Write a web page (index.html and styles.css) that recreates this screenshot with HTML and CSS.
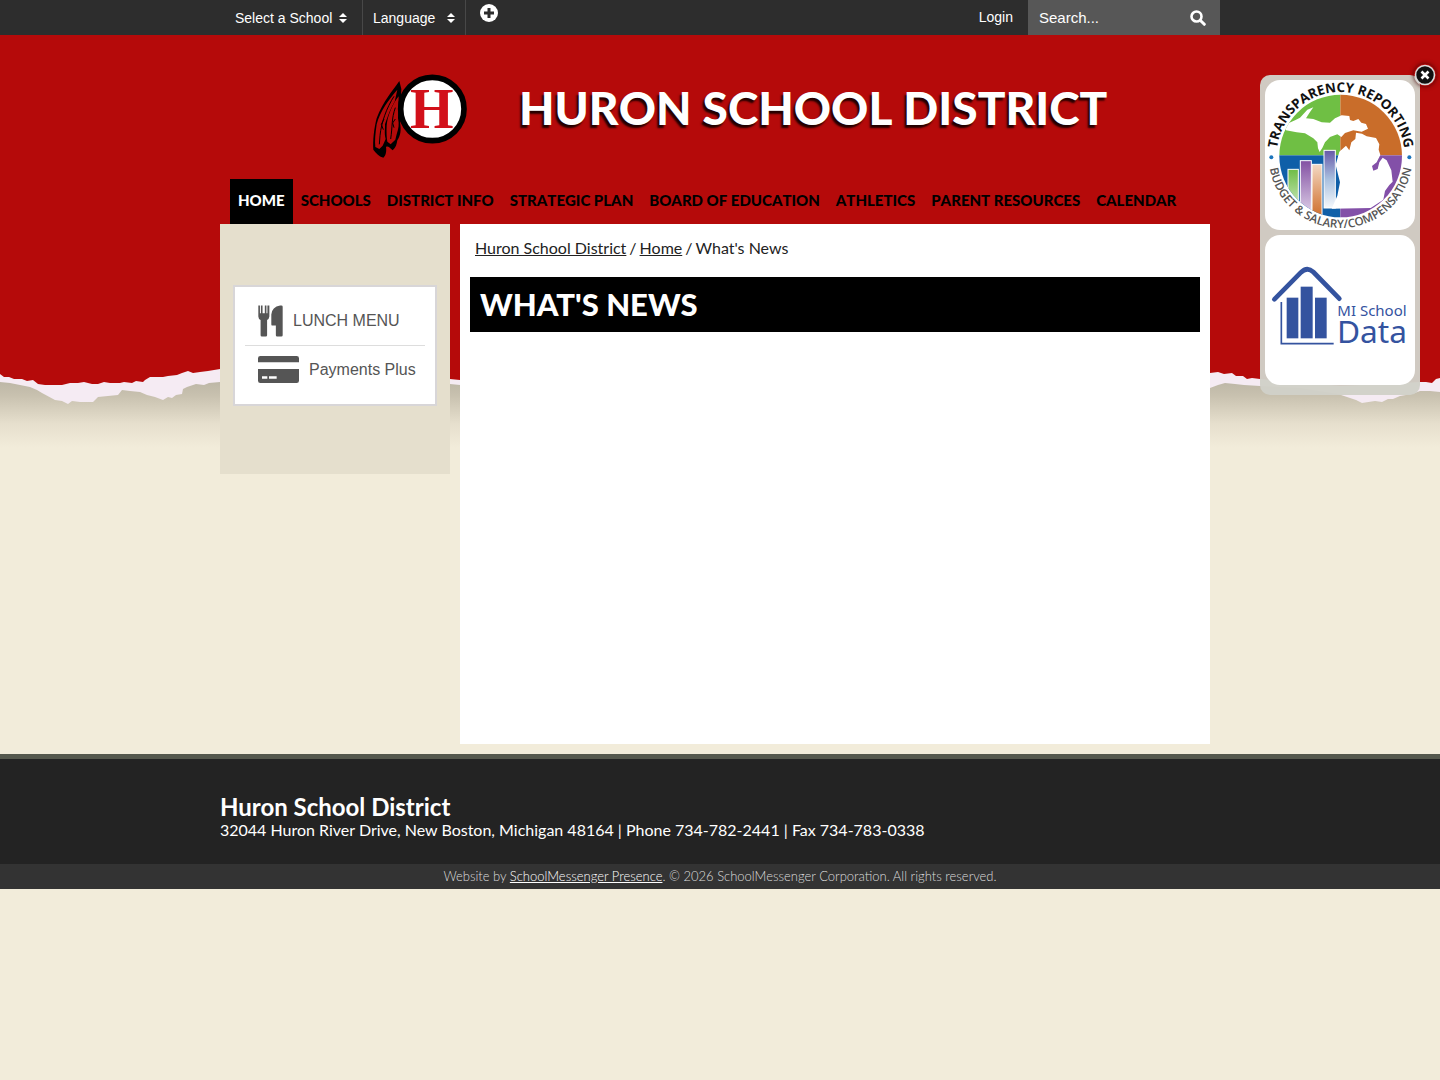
FILE: index.html
```html
<!DOCTYPE html>
<html lang="en">
<head>
    <meta charset="utf-8">
    <title>What's News - Huron School District</title>
    <link rel="stylesheet" href="styles.css">
</head>
<body>

<!-- torn paper background -->
<svg class="torn-paper" viewBox="0 0 1440 455" preserveAspectRatio="none" aria-hidden="true">
    <defs>
        <linearGradient id="paperShadow" x1="0" y1="0" x2="0" y2="1">
            <stop offset="0" stop-color="#bab4a4"/>
            <stop offset=".25" stop-color="#c8c1af"/>
            <stop offset=".65" stop-color="#e6dfcd"/>
            <stop offset="1" stop-color="#f2ecda"/>
        </linearGradient>
    </defs>
    <rect y="378" width="1440" height="70" fill="url(#paperShadow)"/>
    <path fill="#f5ebf3" d="M0 360H1440V392L1430 391 1420 391 1412 394 1400 396 1393 399 1388 399 1382 402 1375 401 1362 403 1356 400 1350 398 1338 394 1300 388 1260 386 1244 385 1235 384 1225 383 1218 385 1210 388 1000 384 700 388 460 385 450 384 300 386 220 382 209 383 204 385 196 384 187 387 183 389 182 394 176 395 172 398 168 397 163 400 155 397 147 395 140 392 130 391 122 390 118 395 108 396 98 397 93 402 80 402 72 401 68 404 62 401 55 400 42 393 37 390 30 387 20 385 10 383 0 382Z"/>
    <path fill="#b50a0a" d="M0 0H1440V378L1436 379 1432 383 1426 382 1420 382 1340 386 1300 382 1260 379 1252 378 1247 379 1243 376 1236 376 1232 373 1224 374 1218 372 1210 373 1000 376 700 374 460 380 450 379 300 376 220 369 208 371 200 372 193 373 188 371 182 373 177 375 168 376 163 377 157 377 150 377 145 380 143 382 136 381 132 383 124 382 120 383 110 383 104 382 98 384 92 384 84 382 78 383 70 383 62 385 52 385 45 385 38 384 33 380 27 381 22 379 14 379 9 377 4 377 0 374Z"/>
</svg>

<div class="topbar">
    <div class="topbar-inner">
        <div class="picker picker-school">
            <select aria-label="Select a School">
                <option>Select a School</option>
            </select>
            <svg class="sort" viewBox="0 0 8 10" aria-hidden="true"><path d="M4 0L8 4H0ZM0 6H8L4 10Z"/></svg>
        </div>
        <div class="picker picker-language">
            <select aria-label="Language">
                <option>Language</option>
            </select>
            <svg class="sort" viewBox="0 0 8 10" aria-hidden="true"><path d="M4 0L8 4H0ZM0 6H8L4 10Z"/></svg>
        </div>
        <button class="more" type="button" aria-label="More">
            <svg viewBox="0 0 18 18" aria-hidden="true"><circle cx="9" cy="9" r="9" fill="#fff"/><path d="M9 4V14M4 9H14" stroke="#2d2d2d" stroke-width="3"/></svg>
        </button>
        <a class="login" href="#">Login</a>
        <form class="search">
            <input type="text" placeholder="Search..." aria-label="Search">
            <button type="submit" aria-label="Search">
                <svg viewBox="0 0 16 16" aria-hidden="true"><circle cx="6.5" cy="6.5" r="5" fill="none" stroke="#fff" stroke-width="2.6"/><path d="M10.2 10.2L14.3 14.3" stroke="#fff" stroke-width="3" stroke-linecap="round"/></svg>
            </button>
        </form>
    </div>
</div>

<header class="banner">
    <svg class="logo" viewBox="36 42 288 258" role="img" aria-label="Huron H">
        <path d="M118 66C100 92 68 128 50 178C42 208 38 246 40 272C48 282 56 292 70 296C78 290 80 276 78 264C84 260 88 266 98 274C108 266 110 256 112 244C122 230 124 214 120 190L124 90Z"/>
        <path fill="#b50a0a" d="M112 92C88 120 60 156 50 196C46 224 44 246 46 264L58 270 68 260 77 240C72 222 76 208 75 196C84 168 92 148 104 128Z"/>
        <path fill="#b50a0a" d="M116 112C98 134 82 172 80 200C79 220 80 236 82 248L92 256 106 242 110 226C116 208 118 196 114 178Z"/>
        <path fill="none" stroke="#000" stroke-width="3" d="M102 112C80 146 64 190 60 230L58 256M72 180L64 196 70 212M106 146C94 180 98 200 92 240M106 180L98 192 102 206"/>
        <circle cx="217" cy="150" r="95" fill="#fff" stroke="#000" stroke-width="17"/>
        <text class="logo-letter" x="215" y="207" text-anchor="middle">H</text>
    </svg>
    <div class="site-title">HURON SCHOOL DISTRICT</div>
</header>

<nav class="main-nav">
    <a class="active" href="#">HOME</a>
    <a href="#">SCHOOLS</a>
    <a href="#">DISTRICT INFO</a>
    <a href="#">STRATEGIC PLAN</a>
    <a href="#">BOARD OF EDUCATION</a>
    <a href="#">ATHLETICS</a>
    <a href="#">PARENT RESOURCES</a>
    <a href="#">CALENDAR</a>
</nav>

<div class="page">
    <aside class="sidebar">
        <div class="quick-links">
            <a href="#">
                <svg class="icon-lunch" viewBox="113 101 77 98" aria-hidden="true"><path d="M114 102H119V126H122V102H127V126H134V102H139V126H142V102H148V136Q147 144 141 147V194Q141 198 137 198H125Q121 198 121 194V147Q114 143 114 136ZM181 102H185Q189 102 189 106V194Q189 198 185 198H172Q168 198 168 194V164H156Q154 164 154 160V130Q156 106 181 102Z"/></svg>
                LUNCH MENU
            </a>
            <a href="#">
                <svg class="icon-card" viewBox="114 258 123 81" aria-hidden="true"><path fill-rule="evenodd" d="M114 277V265Q114 258 121 258H230Q237 258 237 265V277ZM114 297H237V332Q237 339 230 339H121Q114 339 114 332ZM126 319V326H142V319ZM147 319V326H170V319Z"/></svg>
                Payments Plus
            </a>
        </div>
    </aside>

    <main class="content">
        <div class="breadcrumb">
            <a href="#">Huron School District</a>
            <span>/</span>
            <a href="#">Home</a>
            <span>/</span>
            <span>What's News</span>
        </div>
        <h1>WHAT'S NEWS</h1>
    </main>
</div>

<footer>
    <div class="footer-main">
        <div class="footer-inner">
            <h2>Huron School District</h2>
            <p>32044 Huron River Drive, New Boston, Michigan 48164 | Phone 734-782-2441 | Fax 734-783-0338</p>
        </div>
    </div>
    <div class="footer-bottom">Website by <a href="#">SchoolMessenger Presence</a>. &copy; 2026 SchoolMessenger Corporation. All rights reserved.</div>
</footer>

<!-- floating badges -->
<div class="badges">
    <button class="badges-close" type="button" aria-label="Close">
        <svg viewBox="0 0 22 22" aria-hidden="true"><circle cx="11" cy="11" r="9.5" fill="#111" stroke="#ddd" stroke-width="1.6"/><path d="M7.5 7.5L14.5 14.5M14.5 7.5L7.5 14.5" stroke="#fff" stroke-width="2.6"/></svg>
    </button>
    <a class="badge" href="#" aria-label="Transparency Reporting">
        <svg viewBox="45 75 450 450">
            <defs>
                <clipPath id="disc"><circle cx="272" cy="303" r="184"/></clipPath>
                <linearGradient id="barGreen" x1="0" y1="0" x2="0" y2="1"><stop offset="0" stop-color="#6fbd45"/><stop offset="1" stop-color="#e9f5e2"/></linearGradient>
                <linearGradient id="barPurple" x1="0" y1="0" x2="0" y2="1"><stop offset="0" stop-color="#8350a3"/><stop offset="1" stop-color="#e6dcee"/></linearGradient>
                <linearGradient id="barOrange" x1="0" y1="0" x2="0" y2="1"><stop offset="0" stop-color="#f3d9c4"/><stop offset=".6" stop-color="#dc9460"/><stop offset="1" stop-color="#cc6a28"/></linearGradient>
                <linearGradient id="barBlue" x1="0" y1="0" x2="0" y2="1"><stop offset="0" stop-color="#6658a8"/><stop offset=".5" stop-color="#a9c0df"/><stop offset="1" stop-color="#f4f8fc"/></linearGradient>
                <path id="arcTop" d="M80 303A192 192 0 0 1 464 303"/>
                <path id="arcBottom" d="M56 303A216 216 0 0 0 488 303"/>
            </defs>
            <g clip-path="url(#disc)">
                <rect x="80" y="110" width="191" height="191" fill="#6fbf44"/>
                <rect x="271" y="110" width="190" height="191" fill="#c96d2a"/>
                <rect x="80" y="301" width="191" height="190" fill="#0f5fa8"/>
                <rect x="271" y="301" width="190" height="190" fill="#8350a8"/>
                <g stroke="#fff" stroke-width="3">
                    <rect x="114" y="343" width="31" height="150" fill="url(#barGreen)"/>
                    <rect x="151" y="317" width="33" height="175" fill="url(#barPurple)"/>
                    <rect x="186" y="328" width="30" height="165" fill="url(#barOrange)"/>
                    <rect x="222" y="286" width="34" height="173" fill="url(#barBlue)"/>
                </g>
                <path fill="#fff" d="M190 157L172 164 150 188 135 196 98 212 108 226 140 232 165 235 190 250 202 262 204 280 209 291 217 279 225 262 240 246 262 238 274 246 285 234 310 226 335 230 354 221 348 207 334 203 325 192 310 198 300 195 298 183 275 181 255 190 240 203 215 202 190 192 168 190 178 174Z"/>
                <path fill="#fff" d="M318 233L336 236 350 244 378 249 388 268 386 284 391 300 380 322 366 333 370 347 383 342 388 322 398 308 410 316 424 346 428 380 418 390 405 408 400 434 362 459 245 461 262 422 270 382 257 330 268 290 288 272 298 286 304 262 316 252Z"/>
            </g>
            <circle cx="64" cy="307" r="6" fill="#1c75bc"/>
            <circle cx="478" cy="307" r="6" fill="#1c75bc"/>
            <text class="ring-top"><textPath href="#arcTop" startOffset="50%" text-anchor="middle">TRANSPARENCY REPORTING</textPath></text>
            <text class="ring-bottom"><textPath href="#arcBottom" startOffset="50%" text-anchor="middle">BUDGET &amp; SALARY/COMPENSATION</textPath></text>
        </svg>
    </a>
    <a class="badge" href="#" aria-label="MI School Data">
        <svg viewBox="45 15 450 450">
            <g fill="#34539f">
                <rect x="110" y="203" width="35" height="122"/>
                <rect x="152" y="170" width="36" height="155"/>
                <rect x="195" y="203" width="35" height="122"/>
            </g>
            <g fill="none" stroke="#34539f">
                <path stroke-width="14" stroke-linecap="round" d="M73 208L152 128Q171 108 190 126L268 206"/>
                <path stroke-width="5" d="M94 216V341H251"/>
            </g>
            <text class="mi-small" x="262" y="258">MI School</text>
            <text class="mi-big" x="261" y="340">Data</text>
        </svg>
    </a>
</div>

</body>
</html>
```
FILE: styles.css
```css
* {
    box-sizing: border-box;
}

body {
    margin: 0;
    background-color: #f2ecda;
    color: #222;
    font-family: Lato, sans-serif;
    font-size: 16px;
    line-height: 20px;
}

.torn-paper {
    position: absolute;
    z-index: -1;
    top: 0;
    left: 0;
    width: 100%;
    height: 455px;
}

/* top bar */
.topbar {
    background-color: #2d2d2d;
    font-family: "Liberation Sans", Arial, sans-serif;
    font-size: 14px;
}

.topbar-inner {
    display: flex;
    max-width: 1000px;
    height: 35px;
    margin: 0 auto;
}

.picker {
    display: flex;
    align-items: center;
    padding: 0 10px;
    border-right: 1px solid #484848;
}

.picker-school {
    gap: 6px;
    padding: 0 15px;
}

.picker-language {
    gap: 11px;
}

.picker select {
    appearance: none;
    padding: 0;
    border: 0;
    background: none;
    color: #fff;
    font: inherit;
}

.sort {
    width: 8px;
    height: 10px;
    fill: #fff;
}

.topbar button {
    padding: 0;
    border: 0;
    background: none;
    cursor: pointer;
}

.more {
    align-self: flex-start;
    margin: 4px 14px;
}

.more svg {
    display: block;
    width: 18px;
    height: 18px;
}

.login {
    margin-left: auto;
    padding: 0 15px;
    color: #fff;
    line-height: 35px;
    text-decoration: none;
}

.search {
    display: flex;
    align-items: center;
    width: 192px;
    padding: 0 14px 0 11px;
    background-color: #575757;
}

.search input {
    flex: 1;
    min-width: 0;
    padding: 0;
    border: 0;
    background: none;
    color: #fff;
    font: inherit;
    font-size: 15px;
}

.search input::placeholder {
    color: #fff;
}

.search svg {
    display: block;
    width: 16px;
    height: 16px;
}

/* banner */
.banner {
    display: flex;
    max-width: 1000px;
    height: 144px;
    margin: 0 auto;
    padding: 38px 0 0 152px;
    gap: 51px;
}

.logo {
    width: 96px;
    height: 86px;
}

.logo-letter {
    fill: #d2101a;
    font-family: "Liberation Serif", serif;
    font-size: 168px;
    font-weight: bold;
}

.site-title {
    color: #fff;
    font-size: 46px;
    font-weight: 900;
    font-kerning: none;
    line-height: 70px;
    text-shadow: -2px 3px 2px #200;
    white-space: nowrap;
}

/* navigation */
.main-nav {
    display: flex;
    max-width: 1000px;
    margin: 0 auto;
    padding-left: 10px;
}

.main-nav a {
    padding: 0 8px 2px;
    color: #000;
    font-size: 15px;
    font-weight: 900;
    font-kerning: none;
    line-height: 43px;
    text-decoration: none;
    white-space: nowrap;
}

.main-nav .active {
    background-color: #000;
    color: #fff;
}

/* page */
.page {
    display: flex;
    align-items: flex-start;
    gap: 10px;
    max-width: 1000px;
    margin: 0 auto;
    padding: 0 10px 10px 0;
}

.sidebar {
    flex: 0 0 230px;
    padding: 61px 13px 68px;
    background-color: #e5dfcd;
}

.quick-links {
    padding: 10px 10px 11px;
    border: 2px solid #d8d6d8;
    background-color: #fff;
}

.quick-links a {
    display: flex;
    align-items: center;
    gap: 10px;
    height: 48px;
    padding-left: 13px;
    color: #555;
    font-family: "Liberation Sans", Arial, sans-serif;
    text-decoration: none;
    white-space: nowrap;
}

.quick-links a + a {
    border-top: 1px solid #ddd;
}

.quick-links svg {
    flex: none;
    fill: #555;
}

.icon-lunch {
    width: 25px;
    height: 32px;
}

.icon-card {
    width: 41px;
    height: 27px;
}

.content {
    flex: 1;
    min-height: 520px;
    padding: 14px 10px;
    background-color: #fff;
}

.breadcrumb {
    display: flex;
    flex-wrap: wrap;
    gap: 3px;
    padding: 0 5px;
}

.breadcrumb a {
    color: #222;
}

h1 {
    margin: 19px 0 0;
    padding: 0 10px;
    background-color: #000;
    color: #fff;
    font-size: 31px;
    font-weight: 900;
    line-height: 55px;
}

/* footer */
.footer-main {
    padding: 34px 0 24px;
    border-top: 5px solid #55584d;
    background-color: #232323;
    color: #fff;
}

.footer-inner {
    max-width: 1000px;
    margin: 0 auto;
}

h2 {
    margin: 0;
    font-size: 24px;
    font-weight: bold;
    line-height: 27px;
}

.footer-inner p {
    margin: 0;
}

.footer-bottom {
    background-color: #333;
    color: #ddd;
    font-size: 13px;
    font-weight: 300;
    line-height: 25px;
    text-align: center;
}

.footer-bottom a {
    color: #fff;
}

/* floating badges */
.badges {
    position: absolute;
    top: 75px;
    right: 20px;
    display: flex;
    flex-direction: column;
    gap: 5px;
    padding: 5px 5px 10px;
    border-radius: 10px;
    background-color: rgba(209, 209, 200, .97);
}

.badges-close {
    position: absolute;
    top: -11px;
    right: -16px;
    padding: 0;
    border: 0;
    border-radius: 50%;
    background: none;
    box-shadow: 0 0 5px #400;
    cursor: pointer;
}

.badges-close svg {
    display: block;
    width: 22px;
    height: 22px;
}

.badge {
    width: 150px;
    height: 150px;
    border-radius: 15px;
    background-color: #fff;
}

.badge svg {
    display: block;
    overflow: visible;
}

.ring-top {
    fill: #111;
    font-family: "Open Sans", sans-serif;
    font-size: 40px;
    font-weight: bold;
}

.ring-bottom {
    fill: #555;
    font-family: "Open Sans", sans-serif;
    font-size: 35px;
    font-weight: 600;
}

.mi-small,
.mi-big {
    fill: #34539f;
    font-family: "Noto Sans", sans-serif;
    font-size: 45px;
}

.mi-big {
    font-size: 95px;
}
```
